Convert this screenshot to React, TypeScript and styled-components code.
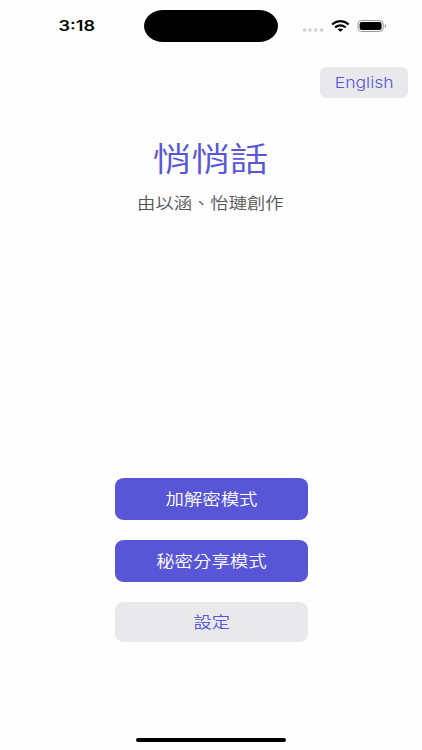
import React from "react";
import styled, { createGlobalStyle } from "styled-components";

const GlobalStyle = createGlobalStyle`
  *, *::before, *::after { box-sizing: border-box; }
  body { margin: 0; background: #fefefe; overflow: hidden; }
`;

const cjk = `"Noto Sans CJK TC", "Noto Sans", sans-serif`;
const accent = "#5856d6";

const Screen = styled.main`
  width: 422px;
  height: 750px;
  display: flex;
  flex-direction: column;
  align-items: center;
  background: #fefefe;
  font-family: ${cjk};
`;

const StatusBar = styled.header`
  width: 100%;
  height: 52px;
  display: grid;
  grid-template-columns: 144px 134px 1fr;
  align-items: center;
`;

const Wide = styled.span<{ $scale: number }>`
  display: inline-block;
  white-space: nowrap;
  transform: scaleX(${(p) => p.$scale});
`;

const Clock = styled.time`
  padding-left: 10px;
  text-align: center;
  font: 600 14.6px/20px Inter, sans-serif;
  color: #050505;
`;

const Island = styled.div`
  height: 32px;
  border-radius: 19px / 16px;
  background: #000;
`;

const StatusIcons = styled.div`
  display: flex;
  align-items: center;
  padding-left: 24px;
  svg { display: block; }
`;

const LanguageRow = styled.nav`
  width: 100%;
  display: flex;
  justify-content: flex-end;
  padding: 15px 14px 0 0;
`;

const LanguageButton = styled.button`
  width: 88px;
  height: 31px;
  padding: 0;
  border: 0;
  border-radius: 6px;
  background: #e9e9eb;
  color: ${accent};
  font: 350 15px/31px Inter, sans-serif;
`;

const Title = styled.h1`
  margin: 35px 0 0;
  padding-right: 1px;
  font-size: 33px;
  line-height: 48px;
  font-weight: 350;
  color: ${accent};
`;

const Credits = styled.p`
  margin: 9px 0 0;
  padding-right: 1px;
  font-size: 15.6px;
  line-height: 24px;
  font-weight: 350;
  color: #555;
`;

const Actions = styled.section`
  flex: 1;
  display: flex;
  flex-direction: column;
  justify-content: flex-end;
  gap: 20.5px;
  padding: 0 0 96px 1px;
`;

const ActionButton = styled.button<{ $secondary?: boolean }>`
  width: 193px;
  height: ${(p) => (p.$secondary ? 40 : 41.4)}px;
  padding: 0;
  border: 0;
  border-radius: 9px / 8px;
  background: ${(p) => (p.$secondary ? "#e9e9eb" : accent)};
  color: ${(p) => (p.$secondary ? accent : "#fff")};
  font: 350 15.8px/40px ${cjk};
`;

const HomeIndicator = styled.div`
  width: 150px;
  height: 4px;
  margin-bottom: 8px;
  border-radius: 2px;
  background: #000;
`;

const StatusGlyphs = () => (
  <svg width="88" height="20" viewBox="302 16 88 20" aria-hidden="true">
    <g fill="#cfcfcf">
      <circle cx="304.4" cy="30" r="1.8" />
      <circle cx="310" cy="30" r="1.8" />
      <circle cx="315.6" cy="30" r="1.8" />
      <circle cx="321.5" cy="30" r="1.8" />
    </g>
    <g fill="none" stroke="#000" strokeWidth="2.2">
      <path d="M332.1 24.3 Q340.4 18 348.7 24.3" />
      <path d="M335.1 27.3 Q340.4 23.4 345.7 27.3" />
    </g>
    <path d="M337.6 29.4 Q340.4 27.4 343.2 29.4 L340.4 31.8Z" />
    <rect x="358" y="20.5" width="25.2" height="11" rx="3.6" fill="none" stroke="#999" />
    <rect x="359.6" y="22" width="22" height="8" rx="2.2" />
    <path d="M384.8 24 Q388 26 384.8 28Z" fill="#999" />
  </svg>
);

export default function App() {
  return (
    <>
      <GlobalStyle />
      <Screen>
        <StatusBar>
          <Clock><Wide $scale={1.24}>3:18</Wide></Clock>
          <Island />
          <StatusIcons><StatusGlyphs /></StatusIcons>
        </StatusBar>
        <LanguageRow>
          <LanguageButton><Wide $scale={1.17}>English</Wide></LanguageButton>
        </LanguageRow>
        <Title><Wide $scale={1.17}>悄悄話</Wide></Title>
        <Credits><Wide $scale={1.175}>由以涵、怡璉創作</Wide></Credits>
        <Actions>
          <ActionButton><Wide $scale={1.165}>加解密模式</Wide></ActionButton>
          <ActionButton><Wide $scale={1.165}>秘密分享模式</Wide></ActionButton>
          <ActionButton $secondary><Wide $scale={1.165}>設定</Wide></ActionButton>
        </Actions>
        <HomeIndicator />
      </Screen>
    </>
  );
}
